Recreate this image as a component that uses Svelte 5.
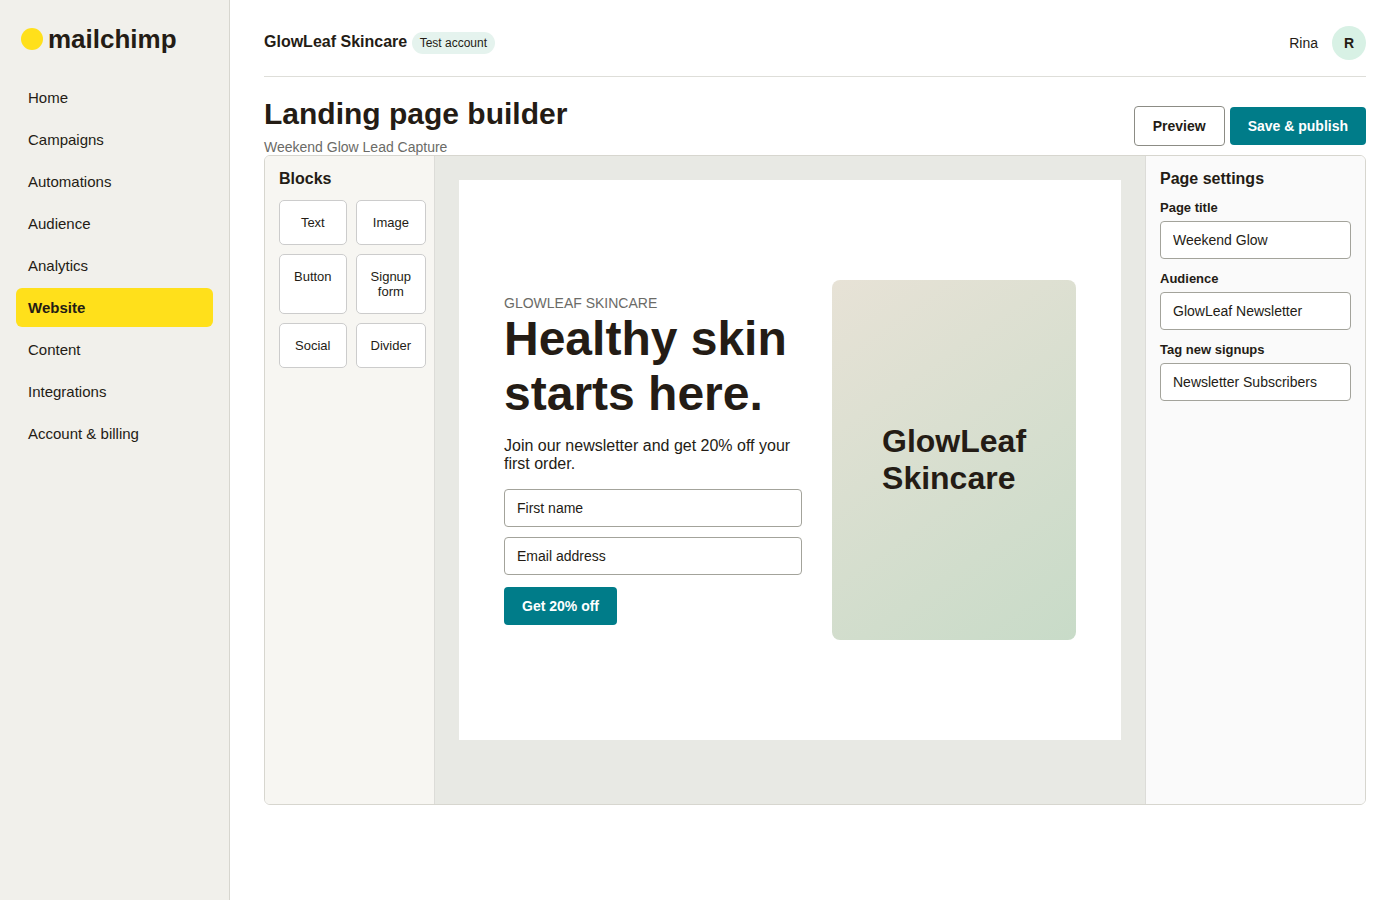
<script>
  const navItems = [
    "Home",
    "Campaigns",
    "Automations",
    "Audience",
    "Analytics",
    "Website",
    "Content",
    "Integrations",
    "Account & billing",
  ];

  const blocks = ["Text", "Image", "Button", "Signup form", "Social", "Divider"];

  let active = $state("Website");

  let settings = $state([
    { id: "page-title", label: "Page title", value: "Weekend Glow" },
    { id: "audience", label: "Audience", value: "GlowLeaf Newsletter" },
    { id: "signup-tag", label: "Tag new signups", value: "Newsletter Subscribers" },
  ]);
</script>

<div class="app">
  <aside class="sidebar">
    <div class="logo">
      <span class="logo-dot"></span>
      <span>mailchimp</span>
    </div>
    <nav>
      {#each navItems as item (item)}
        <a
          href="#{item.toLowerCase().replace(/\W+/g, '-')}"
          class:active={item === active}
          aria-current={item === active ? "page" : undefined}
          onclick={() => (active = item)}>{item}</a
        >
      {/each}
    </nav>
  </aside>

  <main>
    <header class="topbar">
      <div class="account">
        <strong>GlowLeaf Skincare</strong>
        <span class="badge">Test account</span>
      </div>
      <div class="user">
        <span>Rina</span>
        <span class="avatar">R</span>
      </div>
    </header>

    <div class="page-head">
      <div>
        <h1>Landing page builder</h1>
        <div class="muted">Weekend Glow Lead Capture</div>
      </div>
      <div class="actions">
        <button class="btn secondary">Preview</button>
        <button class="btn">Save &amp; publish</button>
      </div>
    </div>

    <div class="builder">
      <section class="panel blocks">
        <h3>Blocks</h3>
        <div class="block-grid">
          {#each blocks as block (block)}
            <button class="block">{block}</button>
          {/each}
        </div>
      </section>

      <section class="canvas">
        <div class="landing">
          <div>
            <div class="muted">GLOWLEAF SKINCARE</div>
            <h2>Healthy skin starts here.</h2>
            <p>Join our newsletter and get 20% off your first order.</p>
            <form onsubmit={(e) => e.preventDefault()}>
              <input type="text" placeholder="First name" aria-label="First name" />
              <input type="email" placeholder="Email address" aria-label="Email address" />
              <button class="btn">Get 20% off</button>
            </form>
          </div>
          <div class="visual">
            <div>GlowLeaf<br />Skincare</div>
          </div>
        </div>
      </section>

      <section class="panel settings">
        <h3>Page settings</h3>
        {#each settings as field (field.id)}
          <div class="field">
            <label for={field.id}>{field.label}</label>
            <input id={field.id} type="text" bind:value={field.value} />
          </div>
        {/each}
      </section>
    </div>
  </main>
</div>

<style>
  :global(body) {
    margin: 0;
    background: #fff;
  }

  .app,
  .app * {
    box-sizing: border-box;
  }

  .app {
    display: grid;
    grid-template-columns: 230px 1fr;
    min-height: 100vh;
    font-family: "Liberation Sans", Arial, sans-serif;
    font-size: 16px;
    color: #241c15;
  }

  .sidebar {
    padding: 22px 16px;
    background: #f1f0eb;
    border-right: 1px solid #d7d6cf;
  }

  .logo {
    display: flex;
    align-items: center;
    gap: 5px;
    height: 34px;
    margin-bottom: 22px;
    padding: 0 5px;
    font-size: 26px;
    font-weight: 700;
  }

  .logo-dot {
    width: 22px;
    height: 22px;
    border-radius: 50%;
    background: #ffe01b;
  }

  nav {
    display: grid;
    gap: 3px;
  }

  nav a {
    padding: 11px 12px;
    border-radius: 6px;
    color: inherit;
    font-size: 15px;
    line-height: 17px;
    text-decoration: none;
  }

  nav a.active {
    background: #ffe01b;
    font-weight: 700;
  }

  main {
    min-width: 0;
    padding: 26px 34px;
  }

  .topbar {
    display: flex;
    justify-content: space-between;
    align-items: center;
    padding-bottom: 16px;
    border-bottom: 1px solid #deded9;
  }

  .badge {
    display: inline-block;
    padding: 4px 8px;
    border-radius: 20px;
    background: #e5f3ee;
    font-size: 12px;
    line-height: 14px;
  }

  .user {
    display: flex;
    align-items: center;
    gap: 14px;
    font-size: 14px;
  }

  .avatar {
    display: grid;
    place-items: center;
    width: 34px;
    height: 34px;
    border-radius: 50%;
    background: #d8f1e5;
    font-weight: 700;
  }

  .page-head {
    display: flex;
    justify-content: space-between;
    align-items: center;
    margin-top: 20px;
  }

  h1 {
    margin: 0 0 8px;
    font-size: 30px;
    line-height: 34px;
  }

  .muted {
    color: #6b6b67;
    font-size: 14px;
    line-height: 16px;
  }

  .actions {
    display: flex;
    align-items: center;
    gap: 5px;
  }

  .btn {
    padding: 11px 18px;
    border: 0;
    border-radius: 4px;
    background: #007c89;
    color: #fff;
    font: inherit;
    font-size: 14px;
    font-weight: 700;
    line-height: 16px;
    cursor: pointer;
  }

  .btn.secondary {
    border: 1px solid #8c8c85;
    background: #fff;
    color: #241c15;
  }

  .builder {
    display: grid;
    grid-template-columns: 170px 1fr 220px;
    min-height: 650px;
    border: 1px solid #d7d6cf;
    border-radius: 6px;
    overflow: hidden;
  }

  .panel {
    padding: 14px;
  }

  .panel h3 {
    margin: 0 0 12px;
    font-size: 16px;
    line-height: 18px;
  }

  .blocks {
    background: #f7f6f2;
    border-right: 1px solid #dcdcd8;
  }

  .block-grid {
    display: grid;
    grid-template-columns: 1fr 1fr;
    gap: 9px;
  }

  .block {
    display: flex;
    justify-content: center;
    align-items: flex-start;
    padding: 14px;
    border: 1px solid #ccc;
    border-radius: 5px;
    background: #fff;
    color: inherit;
    font: inherit;
    font-size: 13px;
    line-height: 15px;
    text-align: center;
    cursor: grab;
  }

  .canvas {
    padding: 24px;
    background: #e8e9e4;
  }

  .landing {
    display: grid;
    grid-template-columns: 1.1fr 0.9fr;
    gap: 30px;
    align-items: center;
    min-height: 560px;
    padding: 45px;
    background: #fff;
  }

  h2 {
    margin: 0 0 16px;
    font-size: 48px;
    line-height: 55px;
  }

  p {
    margin: 0 0 16px;
    line-height: 18px;
  }

  input {
    display: block;
    width: 100%;
    padding: 10px 12px;
    border: 1px solid #a3a39b;
    border-radius: 4px;
    background: #fff;
    color: #241c15;
    font: inherit;
    font-size: 14px;
    line-height: 16px;
  }

  input::placeholder {
    color: #241c15;
    opacity: 1;
  }

  form input {
    margin-bottom: 10px;
  }

  form .btn {
    margin-top: 2px;
  }

  .visual {
    display: grid;
    place-items: center;
    height: 360px;
    border-radius: 8px;
    background: linear-gradient(145deg, #e7e2d6, #c8dbc8);
    font-size: 32px;
    font-weight: 700;
    line-height: 37px;
  }

  .settings {
    background: #fafafa;
    border-left: 1px solid #dcdcd8;
  }

  .field {
    margin-bottom: 12px;
  }

  .field label {
    display: block;
    margin-bottom: 6px;
    font-size: 13px;
    font-weight: 700;
    line-height: 15px;
  }
</style>
